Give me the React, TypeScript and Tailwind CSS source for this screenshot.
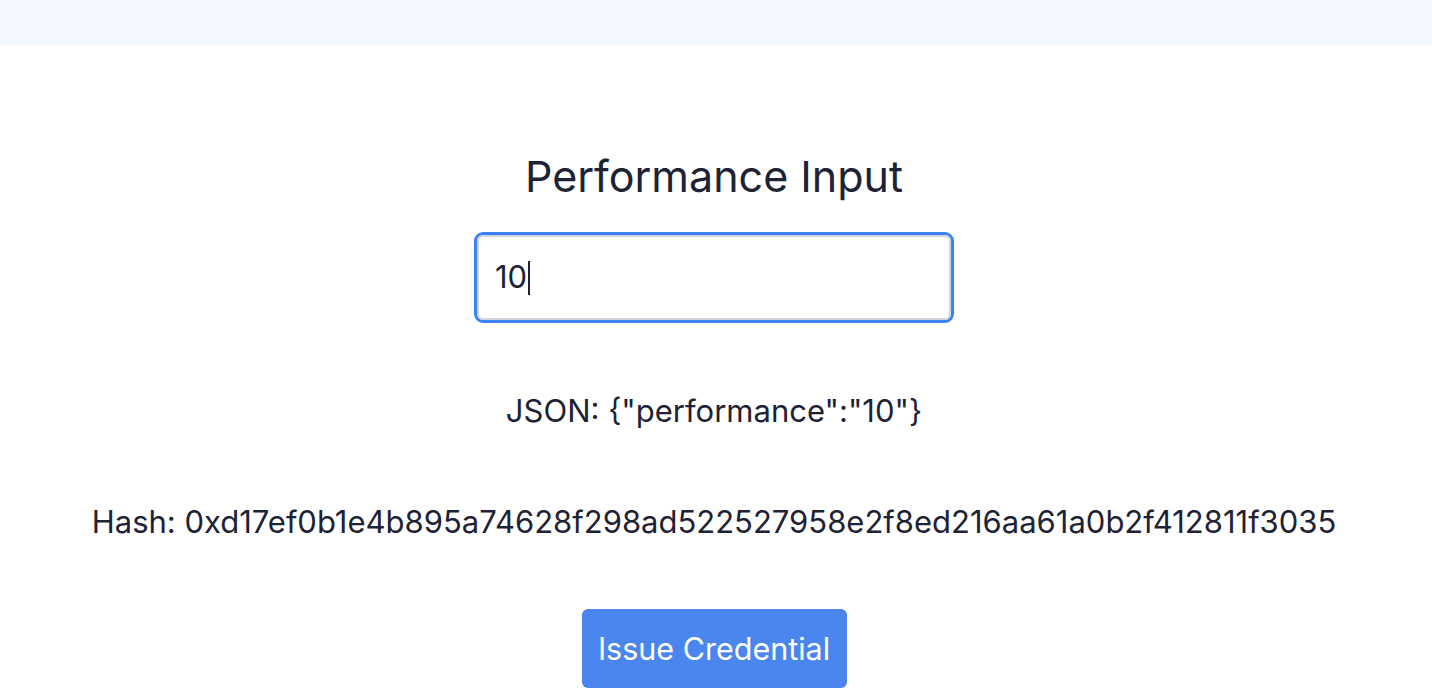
import React from "react";

export default function App() {
  return (
    <div className="min-h-screen bg-white text-[#1e2235]" style={{ fontFamily: "Inter, 'Noto Sans', sans-serif" }}>
      <div className="h-[45px] bg-[#f3f7fe]" />
      <div className="flex flex-col items-center pr-[4px]">
        <h1 className="mt-[103px] text-[43px] leading-[56px] font-normal">Performance Input</h1>
        <div className="mt-[28px] w-[480px] h-[91px] rounded-[9px] border-[3px] border-[#3b82f6] p-0">
          <div className="h-full w-full rounded-[6px] border-2 border-[#d1d5db] flex items-center pl-[16px] text-[31px]">
            <span>10</span>
            <span className="ml-[1px] inline-block w-[1.5px] h-[34px] bg-[#1e2235]" />
          </div>
        </div>
        <p className="mt-[71px] text-[31px] leading-[34px]">JSON: {'{"performance":"10"}'}</p>
        <p className="mt-[77px] text-[31px] leading-[34px]">Hash: 0xd17ef0b1e4b895a74628f298ad522527958e2f8ed216aa61a0b2f412811f3035</p>
        <button className="mt-[70px] w-[265px] h-[79px] rounded-[6px] bg-[#4a86ee] text-white text-[30.5px]">Issue Credential</button>
      </div>
    </div>
  );
}
